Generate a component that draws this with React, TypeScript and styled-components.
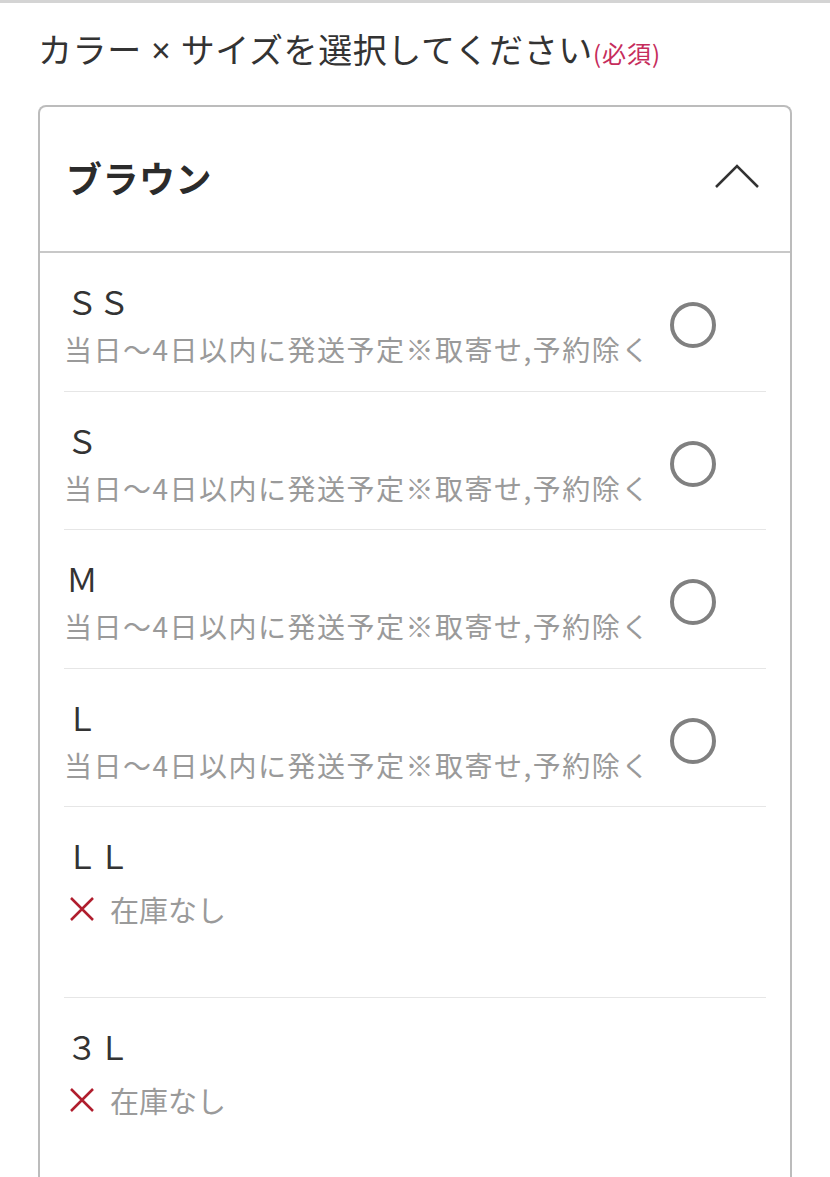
import React from 'react';
import styled, { createGlobalStyle } from 'styled-components';

const GlobalStyle = createGlobalStyle`
  html, body {
    margin: 0;
    padding: 0;
    background: #fff;
    font-family: "Noto Sans CJK JP", "Noto Sans", sans-serif;
    color: #333;
  }
`;

interface ISizeRow {
  soldOut?: boolean;
};

const sizes = [
  { label: 'ＳＳ', soldOut: false },
  { label: 'Ｓ', soldOut: false },
  { label: 'Ｍ', soldOut: false },
  { label: 'Ｌ', soldOut: false },
  { label: 'ＬＬ', soldOut: true },
  { label: '３Ｌ', soldOut: true },
];

const Page = styled.div`
  border-top: 3px solid #d4d4d4;
  padding: 21px 38px 0;
`;

const Title = styled.h2`
  margin: 0 0 27px;
  font-size: 34px;
  line-height: 50px;
  font-weight: 400;
  color: #333;
  letter-spacing: 0.6px;
`;

const Times = styled.span`
  font-family: "Noto Sans", sans-serif;
`;

const Required = styled.span`
  font-size: 24px;
  color: #c62d5c;
  letter-spacing: 1px;
`;

const Panel = styled.div`
  border: 2px solid #bcbcbc;
  border-bottom: none;
  border-radius: 8px 8px 0 0;
`;

const PanelHeader = styled.div`
  display: flex;
  align-items: center;
  justify-content: space-between;
  height: 140px;
  padding: 0 30px 4px 26px;
  border-bottom: 2px solid #c8c8c8;
`;

const ColorName = styled.span`
  font-size: 36px;
  font-weight: 700;
  color: #2b2b2b;
  letter-spacing: 0.5px;
`;

const List = styled.div`
  padding: 0 24px;
`;

const SizeRow = styled.div<ISizeRow>`
  display: flex;
  align-items: center;
  justify-content: space-between;
  padding: 24px 0 ${(p) => (p.soldOut ? '63.5px' : '17.5px')};
  border-bottom: 1.5px solid #e6e6e6;

  &:last-child {
    border-bottom: none;
  }
`;

const SizeInfo = styled.div`
  display: flex;
  flex-direction: column;
`;

const SizeLabel = styled.span`
  font-size: 32px;
  line-height: 48px;
  color: #333;
  padding-left: 2px;
`;

const Delivery = styled.span`
  font-size: 28px;
  line-height: 48px;
  color: #9a9a9a;
  letter-spacing: 1.5px;
`;

const Stock = styled.span`
  display: flex;
  align-items: center;
  gap: 15px;
  margin-top: 6px;
  font-size: 29px;
  line-height: 48px;
  color: #9a9a9a;
  padding-left: 5px;
`;

const Radio = styled.span`
  width: 38px;
  height: 38px;
  border: 4px solid #808080;
  border-radius: 50%;
  margin-right: 50px;
  flex-shrink: 0;
`;

const Chevron = () => (
  <svg width="46" height="28" viewBox="0 0 46 28" fill="none">
    <path d="M2 24 L23 3 L44 24" stroke="#333" strokeWidth="2.5" />
  </svg>
);

const Cross = () => (
  <svg width="26" height="26" viewBox="0 0 26 26">
    <path d="M2 2 L24 24 M24 2 L2 24" stroke="#b01e2e" strokeWidth="2.5" />
  </svg>
);

export default function App() {
  return (
    <Page>
      <GlobalStyle />
      <Title>
        カラー<Times> × </Times>サイズを選択してください<Required>(必須)</Required>
      </Title>
      <Panel>
        <PanelHeader>
          <ColorName>ブラウン</ColorName>
          <Chevron />
        </PanelHeader>
        <List>
          {sizes.map((s) => (
            <SizeRow key={s.label} soldOut={s.soldOut}>
              <SizeInfo>
                <SizeLabel>{s.label}</SizeLabel>
                {s.soldOut ? (
                  <Stock>
                    <Cross />
                    在庫なし
                  </Stock>
                ) : (
                  <Delivery>当日～4日以内に発送予定※取寄せ,予約除く</Delivery>
                )}
              </SizeInfo>
              {!s.soldOut && <Radio />}
            </SizeRow>
          ))}
        </List>
      </Panel>
    </Page>
  );
}
